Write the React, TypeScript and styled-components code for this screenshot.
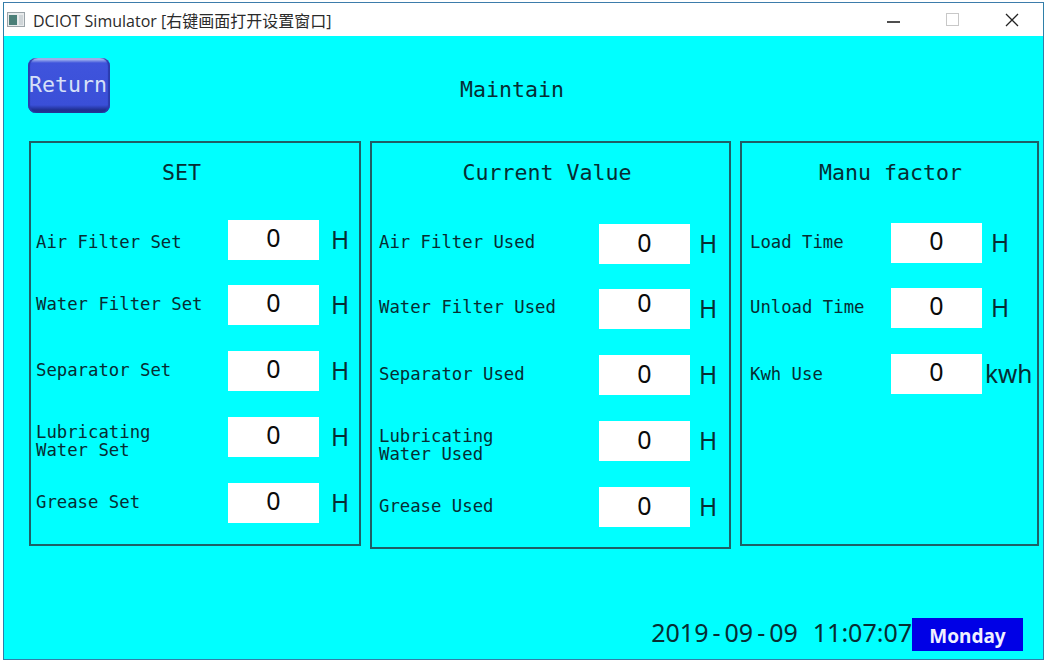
import React from "react";
import styled, { createGlobalStyle } from "styled-components";

const Global = createGlobalStyle`
  html, body { margin: 0; padding: 0; background: #fff; }
  body { width: 1050px; height: 661px; overflow: hidden; }
`;
const mono = `"DejaVu Sans Mono", "Liberation Mono", monospace`;
const sans = `"Noto Sans", "Open Sans", sans-serif`;
const ink = "#072d33";

const Page = styled.div`
  width: 1050px; height: 661px; box-sizing: border-box;
  padding: 2px 6px 1px 3px; background: #fff;
`;
const Window = styled.div`
  height: 658px; box-sizing: border-box; display: flex; flex-direction: column;
  border: 1px solid #2f7fa8; border-top: 1px solid #3d7cab;
`;
const TitleBar = styled.div`
  height: 33px; flex: none; display: flex; align-items: center; background: #fff;
  padding-left: 3px;
`;
const TitleIcon = styled.svg` width: 18px; height: 15px; flex: none; `;
const TitleText = styled.div`
  margin-left: 8px; font: 16px ${`"Open Sans", "Noto Sans CJK SC", sans-serif`}; color: #2a2a2a; white-space: nowrap; flex: 1;
`;
const Controls = styled.div` display: flex; align-items: center; gap: 46px; padding-right: 24px; `;
const Content = styled.div`
  flex: 1; background: #00ffff; display: flex; flex-direction: column; min-height: 0;
`;
const Header = styled.div` display: flex; align-items: center; padding: 22px 0 0 24px; height: 55px; flex: none; `;
const ReturnButton = styled.button`
  width: 82px; height: 55px; box-sizing: border-box; padding: 0 2px 3px 0; border: 0; border-radius: 8px;
  background: linear-gradient(#c6d6f4 0, #3f54dc 5px, #3a4fd8 47px, #1f2f90 52px, #24348f 100%);
  box-shadow: inset 2px 0 1px #2a3cae, inset -2px 0 1px #2a3cae;
  color: #d6e0f8; font: 21.6px ${mono}; white-space: nowrap; text-align: center;
`;
const PageTitle = styled.div` margin-left: 350px; font: 21.6px ${mono}; color: ${ink}; margin-top: 7px; `;
const Panels = styled.div` display: flex; align-items: flex-start; margin: 28px 0 0 25px; `;
const Panel = styled.section<{ $w: number; $h: number; $top: number; $pad: number; $label: number; $after: number }>`
  width: ${(p) => p.$w}px; height: ${(p) => p.$h}px; box-sizing: border-box; flex: none;
  margin-right: ${(p) => p.$after}px;
  border: 2px solid #1f5f66; padding-left: ${(p) => p.$pad}px;
  display: grid; grid-template-columns: ${(p) => p.$label}px 91px auto;
  grid-template-rows: ${(p) => p.$top - 28}px 39px; grid-auto-rows: 40px; row-gap: 26px;
  align-content: start; align-items: center;
`;
const PanelTitle = styled.h2<{ $shift: number }>`
  grid-column: 1 / -1; align-self: start; margin: 0; height: 40px;
  font: 400 21.6px/60px ${mono}; color: ${ink}; text-align: center; white-space: pre;
  transform: translateX(${(p) => p.$shift}px);
`;
const Label = styled.div<{ $dy: number }>`
  font: 17.3px/18px ${mono}; color: ${ink}; white-space: pre-line;
  transform: translateY(${(p) => p.$dy}px);
`;
const Value = styled.div<{ $lh: number }>`
  height: 40px; align-self: start; background: #fff; color: #0a0a0a; text-align: center; box-sizing: border-box;
  font: 25px/${(p) => p.$lh}px ${sans};
`;
const Unit = styled.div<{ $gap: number; $lh: number }>`
  margin-left: ${(p) => p.$gap}px; font: 24.5px/${(p) => p.$lh}px ${sans}; color: ${ink}; white-space: nowrap;
`;
const Footer = styled.div`
  margin-top: auto; display: flex; justify-content: flex-end; align-items: center; padding: 0 20px 6px 0;
`;
const DateTime = styled.div` display: flex; gap: 15px; font: 25px/33px ${sans}; color: ${ink}; white-space: pre; margin-bottom: 4px; `;
const Dash = styled.span` margin: 0 4px; `;
const Day = styled.div`
  width: 111px; height: 33px; background: #0000e6; color: #f0f0ff; font: 700 19px/36px ${sans}; text-align: center; box-sizing: border-box;
`;

type Row = { label: string; unit?: string; dy: number; gap?: number; valueLh?: number };
const set: Row[] = [
  { label: "Air Filter Set", dy: 2 },
  { label: "Water Filter Set", dy: -1 },
  { label: "Separator Set", dy: -1 },
  { label: "Lubricating\nWater Set", dy: 4 },
  { label: "Grease Set", dy: -1 },
];
const cur: Row[] = [
  { label: "Air Filter Used", dy: -2, valueLh: 37 },
  { label: "Water Filter Used", dy: -2, valueLh: 27 },
  { label: "Separator Used", dy: -1, valueLh: 37 },
  { label: "Lubricating\nWater Used", dy: 4, valueLh: 37 },
  { label: "Grease Used", dy: -1, valueLh: 37 },
];
const man: Row[] = [
  { label: "Load Time", dy: -1 },
  { label: "Unload Time", dy: -1 },
  { label: "Kwh Use", unit: "kwh", gap: 3, dy: 0 },
];

const Rows = ({ rows, gap, unitLh }: { rows: Row[]; gap: number; unitLh: number }) => (
  <>
    {rows.map((r) => (
      <React.Fragment key={r.label}>
        <Label $dy={r.dy}>{r.label}</Label>
        <Value $lh={r.valueLh ?? 35}>0</Value>
        <Unit $gap={r.gap ?? gap} $lh={unitLh}>{r.unit ?? "H"}</Unit>
      </React.Fragment>
    ))}
  </>
);

export default function App() {
  return (
    <Page>
      <Global />
      <Window>
        <TitleBar>
          <TitleIcon viewBox="0 0 18 15">
            <rect x="0.5" y="0.5" width="17" height="14" fill="#e8ebec" stroke="#9aa3a8" />
            <rect x="2" y="3" width="8" height="10" fill="#4b7f78" />
            <rect x="12" y="3" width="4" height="10" fill="#cfd5d8" />
          </TitleIcon>
          <TitleText>DCIOT Simulator [右键画面打开设置窗口]</TitleText>
          <Controls>
            <svg width="13" height="14" viewBox="0 0 13 14"><path d="M0 9h13" stroke="#222" strokeWidth="1.6" /></svg>
            <svg width="13" height="14" viewBox="0 0 13 14"><rect x="0.5" y="0.5" width="12" height="12" fill="none" stroke="#c8c8c8" /></svg>
            <svg width="14" height="14" viewBox="0 0 14 14"><path d="M1 1l12 12M13 1L1 13" stroke="#222" strokeWidth="1.3" /></svg>
          </Controls>
        </TitleBar>
        <Content>
          <Header>
            <ReturnButton>Return</ReturnButton>
            <PageTitle>Maintain</PageTitle>
          </Header>
          <Panels>
            <Panel $w={332} $h={405} $top={79} $pad={5} $label={192} $after={9}>
              <PanelTitle $shift={-16}>SET</PanelTitle>
              <Rows rows={set} gap={12} unitLh={44} />
            </Panel>
            <Panel $w={361} $h={408} $top={83} $pad={7} $label={220} $after={9}>
              <PanelTitle $shift={-7}>Current Value</PanelTitle>
              <Rows rows={cur} gap={9} unitLh={42} />
            </Panel>
            <Panel $w={299} $h={405} $top={82} $pad={8} $label={141} $after={0}>
              <PanelTitle $shift={-3}>Manu factor</PanelTitle>
              <Rows rows={man} gap={9} unitLh={42} />
            </Panel>
          </Panels>
          <Footer>
            <DateTime>
              <span>2019<Dash>-</Dash>09<Dash>-</Dash>09</span>
              <span>11:07:07</span>
            </DateTime>
            <Day>Monday</Day>
          </Footer>
        </Content>
      </Window>
    </Page>
  );
}
